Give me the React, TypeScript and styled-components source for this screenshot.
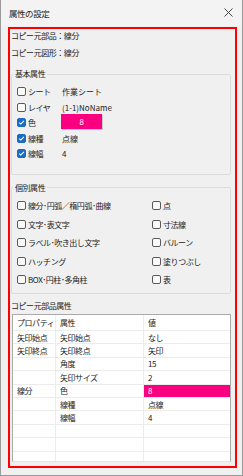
import React from 'react';
import styled, { createGlobalStyle } from 'styled-components';

const GlobalStyle = createGlobalStyle`
  html, body {
    margin: 0;
    padding: 0;
    background: #f0f0f0;
  }
  body {
    font-family: "Noto Sans CJK JP", "Noto Sans", sans-serif;
    font-size: 8px;
    letter-spacing: -0.45px;
    color: #222;
  }
`;

const PINK = '#fa0080';

const Window = styled.div`
  box-sizing: border-box;
  width: 243px;
  height: 476px;
  display: flex;
  flex-direction: column;
  background: #f0f0f0;
  border: 1px solid #9a9a9a;
  border-top: none;
`;

const TitleBar = styled.div`
  height: 26px;
  flex: none;
  display: flex;
  align-items: center;
  justify-content: space-between;
  padding: 0 6px 0 8px;
  background: #f3f3f3;
  font-size: 8.5px;
`;

const CloseButton = styled.button`
  width: 16px;
  height: 16px;
  padding: 0;
  border: none;
  background: transparent;
  display: flex;
  align-items: center;
  justify-content: center;
  margin-top: -2px;
`;

const Body = styled.div`
  flex: 1;
  display: flex;
  padding: 1px 5px 7px 7px;
  min-height: 0;
`;

const Frame = styled.div`
  flex: 1;
  display: flex;
  flex-direction: column;
  border: 2px solid #ff0000;
  padding: 0 4px 4px 1px;
  min-height: 0;
`;

const Info = styled.div`
  display: flex;
  flex-direction: column;
  gap: 3px;
  line-height: 14px;
`;

const Group = styled.fieldset<{ $top: number; $pad: string }>`
  margin: ${(p) => p.$top}px 0 0 0;
  padding: ${(p) => p.$pad};
  border: 1px solid #dcdcdc;
  border-radius: 2px;
  min-width: 0;
`;

const Legend = styled.legend`
  margin-left: -4px;
  padding: 0 2px;
  line-height: 12px;
`;

const BasicRow = styled.div`
  height: 15.5px;
  display: grid;
  grid-template-columns: 45px 1fr;
  align-items: center;
`;

const Grid = styled.div`
  display: grid;
  grid-template-columns: 135px 1fr;
  grid-auto-rows: 18.5px;
  align-items: center;
`;

const CheckLabel = styled.label`
  display: flex;
  align-items: center;
  gap: 2px;
  white-space: nowrap;
`;

const Box = styled.span<{ $checked?: boolean }>`
  box-sizing: border-box;
  width: 9px;
  height: 9px;
  flex: none;
  border-radius: 2px;
  border: 1px solid ${(p) => (p.$checked ? '#1c6cc4' : '#5a5a5a')};
  background: ${(p) => (p.$checked ? '#1c6cc4' : '#fafafa')};
  display: flex;
  align-items: center;
  justify-content: center;
`;

const Value = styled.span`
  white-space: nowrap;
  letter-spacing: 0;
`;

const Swatch = styled.span`
  box-sizing: border-box;
  margin-left: -1px;
  width: 41px;
  height: 15px;
  margin-top: -3px;
  background: ${PINK};
  color: #fff;
  display: flex;
  align-items: center;
  justify-content: center;
  box-shadow: 1px 1px 0 #c8c8c8;
`;

const Caption = styled.div`
  margin-top: 6px;
  line-height: 12px;
`;

const Table = styled.div`
  flex: 1;
  margin: 2px 0 0 1px;
  background: #fff;
  border: 1px solid #a9a9a9;
  border-bottom: 1px solid #e4e4e4;
  display: flex;
  flex-direction: column;
  overflow: hidden;
`;

const Row = styled.div<{ $header?: boolean }>`
  flex: none;
  display: grid;
  grid-template-columns: 43px 88px 1fr;
  height: ${(p) => (p.$header ? '16px' : '13.4px')};
  border-bottom: 1px solid #ececec;
  box-sizing: border-box;
`;

const Cell = styled.div<{ $fill?: boolean }>`
  display: flex;
  align-items: center;
  padding-left: 4px;
  border-right: 1px solid #ececec;
  white-space: nowrap;
  background: ${(p) => (p.$fill ? PINK : 'transparent')};
  color: ${(p) => (p.$fill ? '#fff' : 'inherit')};
  &:last-child {
    border-right: none;
  }
`;

function Check({ checked }: { checked?: boolean }) {
  return (
    <Box $checked={checked}>
      {checked && (
        <svg width="7" height="7" viewBox="0 0 7 7">
          <path d="M1.2 3.6 L2.8 5.1 L5.9 1.9" fill="none" stroke="#fff" strokeWidth="1.1" />
        </svg>
      )}
    </Box>
  );
}

const basic = [
  { label: 'シート', checked: false, value: '作業シート' },
  { label: 'レイヤ', checked: false, value: '(1-1)NoName' },
  { label: '色', checked: true, value: '8', swatch: true },
  { label: '線種', checked: true, value: '点線' },
  { label: '線幅', checked: true, value: '4' },
];

const individual = [
  '線分･円弧／楕円弧･曲線',
  '点',
  '文字･表文字',
  '寸法線',
  'ラベル･吹き出し文字',
  'バルーン',
  'ハッチング',
  '塗りつぶし',
  'BOX･円柱･多角柱',
  '表',
];

const rows: [string, string, string, boolean?][] = [
  ['矢印始点', '矢印始点', 'なし'],
  ['矢印終点', '矢印終点', '矢印'],
  ['', '角度', '15'],
  ['', '矢印サイズ', '2'],
  ['線分', '色', '8', true],
  ['', '線種', '点線'],
  ['', '線幅', '4'],
  ['', '', ''],
  ['', '', ''],
  ['', '', ''],
];

export default function App() {
  return (
    <>
      <GlobalStyle />
      <Window>
        <TitleBar>
          <span>属性の設定</span>
          <CloseButton aria-label="閉じる">
            <svg width="9" height="9" viewBox="0 0 9 9">
              <path d="M0.5 0.5 L8.5 8.5 M8.5 0.5 L0.5 8.5" stroke="#333" strokeWidth="0.9" />
            </svg>
          </CloseButton>
        </TitleBar>
        <Body>
          <Frame>
            <Info>
              <span>コピー元部品：線分</span>
              <span>コピー元図形：線分</span>
            </Info>

            <Group $top={8} $pad="4px 0 12px 5px">
              <Legend>基本属性</Legend>
              {basic.map((b) => (
                <BasicRow key={b.label}>
                  <CheckLabel>
                    <Check checked={b.checked} />
                    {b.label}
                  </CheckLabel>
                  {b.swatch ? <Swatch>{b.value}</Swatch> : <Value>{b.value}</Value>}
                </BasicRow>
              ))}
            </Group>

            <Group $top={7} $pad="3px 0 4px 5px">
              <Legend>個別属性</Legend>
              <Grid>
                {individual.map((label) => (
                  <CheckLabel key={label}>
                    <Check />
                    {label}
                  </CheckLabel>
                ))}
              </Grid>
            </Group>

            <Caption>コピー元部品属性</Caption>
            <Table>
              <Row $header>
                <Cell>プロパティ</Cell>
                <Cell>属性</Cell>
                <Cell>値</Cell>
              </Row>
              {rows.map(([a, b, c, fill], i) => (
                <Row key={i}>
                  <Cell>{a}</Cell>
                  <Cell>{b}</Cell>
                  <Cell $fill={fill}>{c}</Cell>
                </Row>
              ))}
            </Table>
          </Frame>
        </Body>
      </Window>
    </>
  );
}
